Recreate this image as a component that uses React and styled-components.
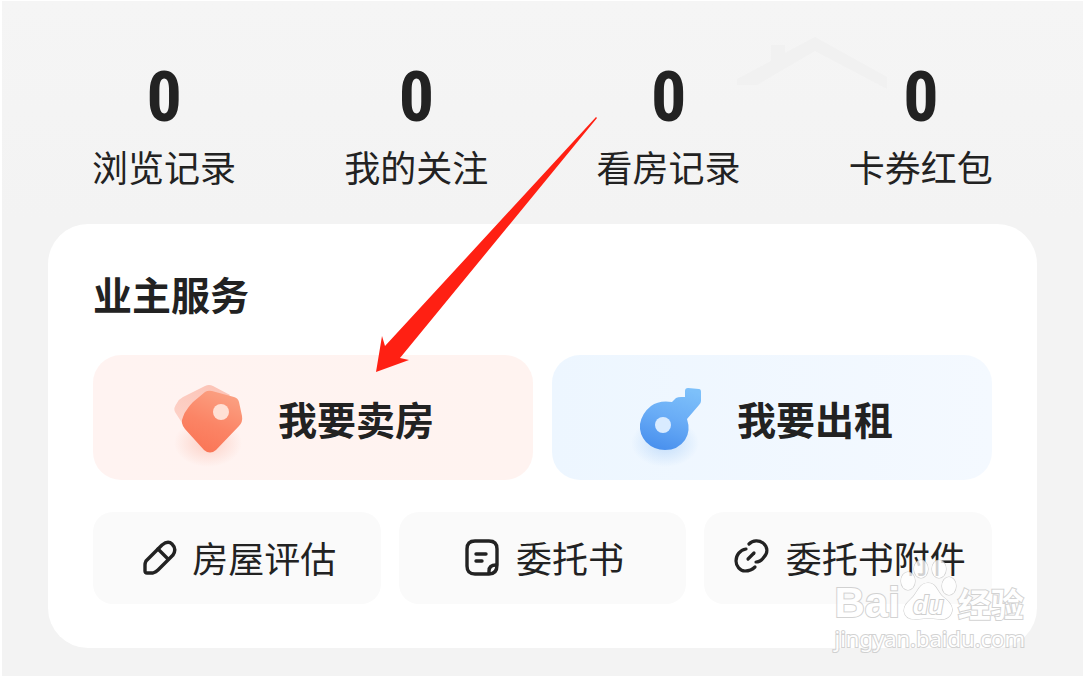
import React from 'react';
import styled, { createGlobalStyle } from 'styled-components';

const stats = [
  { label: '浏览记录', count: 0 },
  { label: '我的关注', count: 0 },
  { label: '看房记录', count: 0 },
  { label: '卡券红包', count: 0 },
];

const TagIcon = () => (
  <svg width="72" height="85" viewBox="0 0 72 85" overflow="visible" aria-hidden="true">
    <defs>
      <linearGradient id="tagFront" x1="0.7" y1="0" x2="0.3" y2="1">
        <stop offset="0" stopColor="#fba183" />
        <stop offset="0.55" stopColor="#fb8465" />
        <stop offset="1" stopColor="#fa7556" />
      </linearGradient>
      <linearGradient id="tagBack" x1="0.8" y1="0" x2="0.2" y2="1">
        <stop offset="0" stopColor="#fcc3b6" />
        <stop offset="1" stopColor="#fdd5cc" />
      </linearGradient>
      <radialGradient id="tagShade">
        <stop offset="0" stopColor="#fbb9a8" stopOpacity="0.6" />
        <stop offset="1" stopColor="#fbb9a8" stopOpacity="0" />
      </radialGradient>
    </defs>
    <ellipse cx="34" cy="68" rx="34" ry="24" fill="url(#tagShade)" />
    <path d="M31 11q4-2 8 0l17 9-38 42-8-11L1 37q-2-4 2-9 2-4 6-6z" fill="url(#tagBack)" />
    <path d="M31 17q3-2 7-1l22 6q4 1 5 5l3 14q1 6-3 10L42 75q-6 5-12 0L11 54q-5-6-2-12 1-4 5-9 2-3 5-6z" fill="url(#tagFront)" />
    <circle cx="47" cy="37" r="8" fill="#ffe0d4" />
  </svg>
);

const KeyIcon = () => (
  <svg width="72" height="85" viewBox="0 0 72 85" overflow="visible" aria-hidden="true">
    <defs>
      <linearGradient id="keyFront" x1="0.7" y1="0" x2="0.4" y2="1">
        <stop offset="0" stopColor="#7dc0fa" />
        <stop offset="0.5" stopColor="#69acf6" />
        <stop offset="1" stopColor="#4a91ee" />
      </linearGradient>
      <radialGradient id="keyShade">
        <stop offset="0" stopColor="#a4cbf7" stopOpacity="0.6" />
        <stop offset="1" stopColor="#a4cbf7" stopOpacity="0" />
      </radialGradient>
    </defs>
    <ellipse cx="32" cy="68" rx="34" ry="24" fill="url(#keyShade)" />
    <path d="M55 13l11 1q2 0 2 3v9q0 2-2 4L54 44q4 12-2 21-7 10-20 10-11 0-19-8-7-8-6-18 2-11 11-18 8-6 21-4l4-4q2-1 5-1h4V16q0-3 3-3z" fill="url(#keyFront)" />
    <circle cx="30" cy="50" r="8" fill="#d9ebff" />
  </svg>
);

const PencilIcon = () => (
  <svg width="36" height="40" viewBox="0 0 36 40" fill="none" stroke="#222" strokeWidth="3.4" strokeLinejoin="round" strokeLinecap="round" aria-hidden="true">
    <path d="M5 24L21 8q6-5 10-1 5 5 1 11L17 33q-2 2-5 3H6q-2 0-2-2v-6q0-2 1-4z" />
    <path d="M17 12l10 10" />
  </svg>
);

const NoteIcon = () => (
  <svg width="36" height="40" viewBox="0 0 36 40" fill="none" stroke="#222" strokeWidth="3.4" strokeLinejoin="round" strokeLinecap="round" aria-hidden="true">
    <path d="M24 37H10q-8 0-8-8V12q0-8 8-8h14q8 0 8 8v16q0 9-8 9z" />
    <path d="M24 36v-2q0-6 7-6" />
    <path d="M11 17h10M11 24h6" />
  </svg>
);

const LinkIcon = () => (
  <svg width="36" height="40" viewBox="0 0 36 40" overflow="visible" fill="none" stroke="#222" strokeWidth="3.2" strokeLinecap="round" aria-hidden="true">
    <path d="M14 7c4-4 10-4 14-1 5 4 5 10 1 14-2 3-4 5-8 5" />
    <path d="M11 12C5 13 1 18 1 24c0 5 4 10 9 10 4 0 7-1 10-4" />
    <path d="M13 22l6-6" />
  </svg>
);

const App = () => {
  return (
    <>
      <GlobalStyle />
      <Page>
        <Roofs viewBox="0 0 160 60" aria-hidden="true">
          <path d="M2 46l34-18V12h14v8l30-16 72 40v12L80 18 22 52H2z" />
        </Roofs>
        <Stats>
          {stats.map((item) => (
            <Stat href="#" key={item.label}>
              <Count>{item.count}</Count>
              <span>{item.label}</span>
            </Stat>
          ))}
        </Stats>
        <Card>
          <Title>业主服务</Title>
          <MainActions>
            <MainButton $from="#fff3f1" $to="#fff3f0">
              <TagIcon />
              我要卖房
            </MainButton>
            <MainButton $from="#edf6ff" $to="#f4f9ff">
              <KeyIcon />
              我要出租
            </MainButton>
          </MainActions>
          <SubActions>
            <SubButton>
              <PencilIcon />
              房屋评估
            </SubButton>
            <SubButton>
              <NoteIcon />
              委托书
            </SubButton>
            <SubButton>
              <LinkIcon />
              委托书附件
            </SubButton>
          </SubActions>
        </Card>
        <Arrow viewBox="0 0 223 258" aria-hidden="true">
          <path d="M1 256L7 220l3 10L221 1l1 1L25 242l9 2z" fill="#ff2013" />
        </Arrow>
        <Watermark>
          <Brand>
            <Latin>Bai</Latin>
            <svg width="58" height="62" viewBox="0 0 58 62" aria-hidden="true">
              <g fill="#fff" stroke="#c4c4c4" strokeWidth="1.2">
                <ellipse cx="8" cy="22" rx="7" ry="9" />
                <ellipse cx="21" cy="10" rx="7" ry="9" />
                <ellipse cx="39" cy="10" rx="7" ry="9" />
                <ellipse cx="49" cy="27" rx="7" ry="9" />
                <path d="M28 24c8 0 9 8 14 13 6 5 11 9 10 15-2 8-9 9-14 8-6-1-13-1-19 0-8 1-14-1-15-8 0-6 4-9 9-14 5-6 7-14 15-14z" />
              </g>
              <DuText x="13" y="55">du</DuText>
            </svg>
            <span>经验</span>
          </Brand>
          <Site>jingyan.baidu.com</Site>
        </Watermark>
      </Page>
    </>
  );
};

const GlobalStyle = createGlobalStyle`
  * {
    box-sizing: border-box;
  }

  body {
    margin: 0;
    background: #fff;
    color: #222;
    font-family: "Noto Sans CJK SC", sans-serif;
  }

  button {
    border: 0;
    color: inherit;
    font-family: inherit;
    cursor: pointer;
  }
`;

const Page = styled.main`
  position: relative;
  min-height: 100vh;
  padding: 60px 46px 28px;
  border: solid #fff;
  border-width: 1px 2px;
  background: linear-gradient(#f5f5f5, #f3f3f3 220px);
`;

const Roofs = styled.svg`
  position: absolute;
  top: 32px;
  right: 188px;
  width: 160px;
  fill: #f1f1f1;
`;

const Stats = styled.nav`
  position: relative;
  display: grid;
  grid-template-columns: repeat(4, 1fr);
  margin: 0 -10px;
`;

const Stat = styled.a`
  display: flex;
  flex-direction: column;
  align-items: center;
  gap: 13px;
  color: #222;
  font-size: 36px;
  line-height: 40px;
  text-decoration: none;
`;

const Count = styled.strong`
  font-family: "Roboto Condensed", Roboto, sans-serif;
  font-size: 70px;
  font-weight: bold;
  line-height: 72px;
`;

const Card = styled.section`
  margin-top: 38px;
  padding: 45px 45px 44px;
  border-radius: 40px;
  background: #fff;
`;

const Title = styled.h2`
  margin: 0 0 38px;
  font-size: 39px;
  line-height: 48px;
`;

const MainActions = styled.div`
  display: grid;
  grid-template-columns: 1fr 1fr;
  gap: 19px;
`;

const MainButton = styled.button`
  display: flex;
  align-items: center;
  justify-content: center;
  gap: 32px;
  padding: 20px 18px 20px 0;
  border-radius: 28px;
  background: linear-gradient(90deg, ${(props) => props.$from}, ${(props) => props.$to});
  font-size: 39px;
  font-weight: bold;
`;

const SubActions = styled.div`
  display: grid;
  grid-template-columns: repeat(3, 1fr);
  gap: 18px;
  margin-top: 32px;
`;

const SubButton = styled.button`
  display: flex;
  align-items: center;
  justify-content: center;
  gap: 15px;
  padding: 25px 0 27px 4px;
  border-radius: 20px;
  background: #fafafa;
  font-size: 36px;
  line-height: 40px;
`;

const Arrow = styled.svg`
  position: absolute;
  top: 115px;
  left: 373px;
  width: 223px;
`;

const Watermark = styled.div`
  position: absolute;
  right: 58px;
  bottom: 21px;
  color: #fff;
  opacity: 0.8;
  pointer-events: none;
  -webkit-text-stroke: 2px #c8c8c8;
  paint-order: stroke fill;
`;

const Brand = styled.div`
  display: flex;
  align-items: flex-end;
  font-size: 33px;
  font-weight: bold;
  line-height: 36px;
`;

const Latin = styled.span`
  font-family: "Liberation Sans", sans-serif;
  font-size: 42px;
`;

const DuText = styled.text`
  font-family: "Liberation Sans", sans-serif;
  font-size: 25px;
  font-style: italic;
  fill: #fff;
  stroke: #c4c4c4;
  stroke-width: 2px;
`;

const Site = styled.div`
  font-family: "Noto Sans", sans-serif;
  font-size: 22px;
  line-height: 34px;
`;

export default App;
